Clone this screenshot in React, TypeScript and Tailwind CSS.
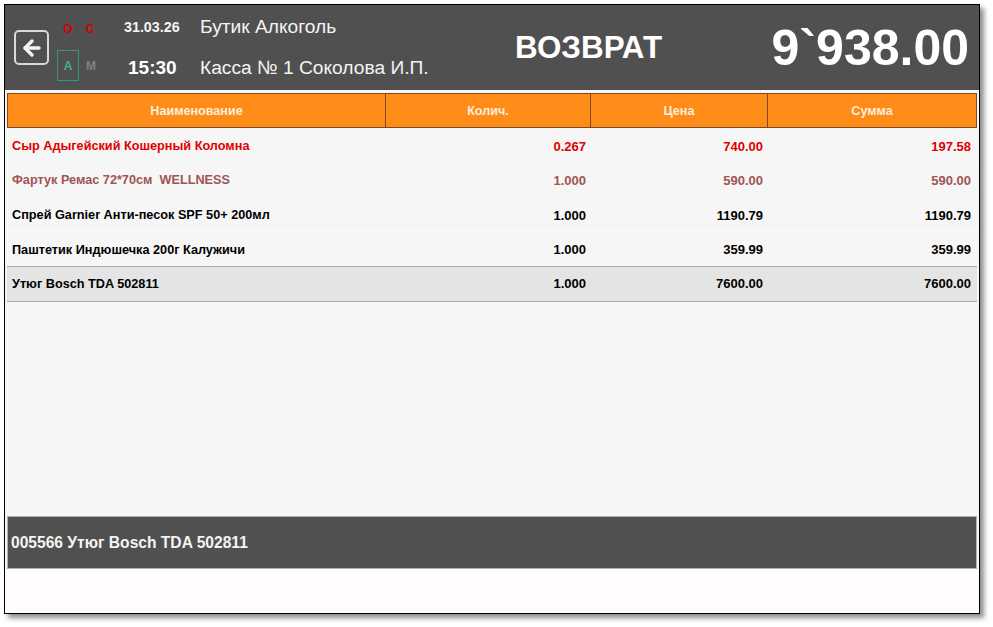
import { ArrowLeft } from "lucide-react"

const rows = [
  { name: "Сыр Адыгейский Кошерный Коломна", qty: "0.267", price: "740.00", sum: "197.58", color: "text-[#e00000]" },
  { name: "Фартук Ремас 72*70см  WELLNESS", qty: "1.000", price: "590.00", sum: "590.00", color: "text-[#a05555]" },
  { name: "Спрей Garnier Анти-песок SPF 50+ 200мл", qty: "1.000", price: "1190.79", sum: "1190.79", color: "text-black" },
  { name: "Паштетик Индюшечка 200г Калужичи", qty: "1.000", price: "359.99", sum: "359.99", color: "text-black" },
]

const colGrid = "grid grid-cols-[378px_205px_177px_208px]"

export default function App() {
  return (
    <div className="min-h-[627px] bg-white pt-[4px] pl-[4px] font-['Liberation_Sans',Arial,sans-serif]">
      <div className="flex h-[610px] w-[976px] flex-col border border-black bg-[#f6f6f6] shadow-[4px_4px_5px_rgba(0,0,0,0.45)]">
        <header className="flex h-[85px] shrink-0 items-center bg-[#505050] text-white">
          <button className="ml-[9px] flex h-[35px] w-[35px] shrink-0 items-center justify-center rounded-[5px] border-2 border-[#d8d8e0] text-[#f2f2fa]">
            <ArrowLeft size={24} strokeWidth={3.4} />
          </button>
          <div className="ml-[8px] grid h-full w-[50px] shrink-0 grid-cols-[23px_27px] grid-rows-[45px_40px] text-center text-[12px] font-bold">
            <span className="self-center pr-[1px] pt-[3px] text-[#d80000]">O</span>
            <span className="self-center pr-[7px] pt-[3px] text-[#d80000]">C</span>
            <span className="flex h-[31px] w-[22px] items-center justify-center border border-[#35967a] text-[#3fb08e]">A</span>
            <span className="flex h-[31px] items-center justify-center pr-[5px] text-[#808080]">M</span>
          </div>
          <div className="ml-[7px] flex h-full w-[86px] shrink-0 flex-col items-start font-bold">
            <span className="mt-[14px] pl-[10px] text-[14.3px] leading-[16px] text-[#f4f4f4]">31.03.26</span>
            <span className="mt-[22px] pl-[14px] text-[19px] leading-[22px]">15:30</span>
          </div>
          <div className="flex h-full w-[315px] shrink-0 flex-col text-[19.2px] text-[#f4f4f4]">
            <span className="mt-[11px] leading-[22px]">Бутик Алкоголь</span>
            <span className="mt-[19px] leading-[22px]">Касса № 1 Соколова И.П.</span>
          </div>
          <div className="w-[148px] shrink-0 pt-[1px] text-[31.4px] font-bold leading-none">ВОЗВРАТ</div>
          <div className="flex-1 pr-[10px] text-right text-[50px] font-bold leading-none">9`938.00</div>
        </header>

        <div className="flex flex-1 flex-col px-[2px] pt-[3px]">
          <div className={`${colGrid} h-[35px] shrink-0 border border-[#7a4a20] bg-[#ff8c19] text-[12.6px] font-bold text-[#fdeedd]`}>
            <div className="flex items-center justify-center border-r border-[#7a4a20] pt-[2px]">Наименование</div>
            <div className="flex items-center justify-center border-r border-[#7a4a20] pt-[2px]">Колич.</div>
            <div className="flex items-center justify-center border-r border-[#7a4a20] pt-[2px]">Цена</div>
            <div className="flex items-center justify-center pt-[2px]">Сумма</div>
          </div>

          {rows.map((row) => (
            <div key={row.name} className={`${colGrid} h-[34.6px] shrink-0 items-center border-b border-[#fbfbfb] bg-[#f6f6f6] pt-[3px] text-[12.7px] font-bold ${row.color}`}>
              <div className="whitespace-pre pl-[5px]">{row.name}</div>
              <div className="pr-[4px] text-right text-[13px]">{row.qty}</div>
              <div className="pr-[4px] text-right text-[13px]">{row.price}</div>
              <div className="pr-[4px] text-right text-[13px]">{row.sum}</div>
            </div>
          ))}

          <div className={`${colGrid} h-[35.6px] shrink-0 items-center border-y border-[#a8a8a8] bg-[#e4e4e4] text-[12.7px] font-bold text-black`}>
            <div className="pl-[5px]">Утюг Bosch TDA 502811</div>
            <div className="pr-[4px] text-right text-[13px]">1.000</div>
            <div className="pr-[4px] text-right text-[13px]">7600.00</div>
            <div className="pr-[4px] text-right text-[13px]">7600.00</div>
          </div>

          <div className="flex-1" />

          <div className="flex h-[53px] shrink-0 items-center border border-[#b0b0b0] bg-[#505050] pl-[3px] text-[15.6px] font-bold text-[#f4f4f4]">
            005566 Утюг Bosch TDA 502811
          </div>
          <div className="-mx-[2px] h-[44px] shrink-0 bg-[#fffbff]" />
        </div>
      </div>
    </div>
  )
}
